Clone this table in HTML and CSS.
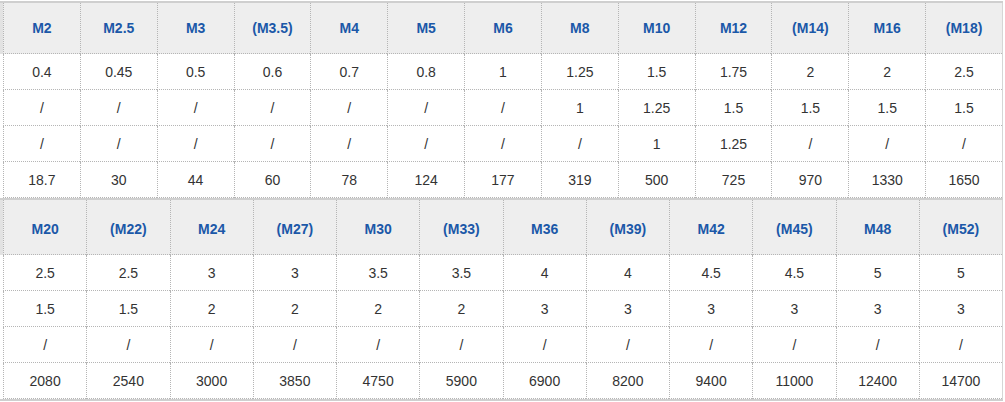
FILE: index.html
```html
<!DOCTYPE html>
<html>
<head>
<meta charset="utf-8">
<link rel="stylesheet" href="styles.css">
</head>
<body>
<div class="block block-first">
<table class="tbl t13">
<thead>
<tr><th>M2</th><th>M2.5</th><th>M3</th><th>(M3.5)</th><th>M4</th><th>M5</th><th>M6</th><th>M8</th><th>M10</th><th>M12</th><th>(M14)</th><th>M16</th><th>(M18)</th></tr>
</thead>
<tbody>
<tr><td>0.4</td><td>0.45</td><td>0.5</td><td>0.6</td><td>0.7</td><td>0.8</td><td>1</td><td>1.25</td><td>1.5</td><td>1.75</td><td>2</td><td>2</td><td>2.5</td></tr>
<tr><td>/</td><td>/</td><td>/</td><td>/</td><td>/</td><td>/</td><td>/</td><td>1</td><td>1.25</td><td>1.5</td><td>1.5</td><td>1.5</td><td>1.5</td></tr>
<tr><td>/</td><td>/</td><td>/</td><td>/</td><td>/</td><td>/</td><td>/</td><td>/</td><td>1</td><td>1.25</td><td>/</td><td>/</td><td>/</td></tr>
<tr><td>18.7</td><td>30</td><td>44</td><td>60</td><td>78</td><td>124</td><td>177</td><td>319</td><td>500</td><td>725</td><td>970</td><td>1330</td><td>1650</td></tr>
</tbody>
</table>
</div>
<div class="block">
<table class="tbl t12">
<thead>
<tr><th>M20</th><th>(M22)</th><th>M24</th><th>(M27)</th><th>M30</th><th>(M33)</th><th>M36</th><th>(M39)</th><th>M42</th><th>(M45)</th><th>M48</th><th>(M52)</th></tr>
</thead>
<tbody>
<tr><td>2.5</td><td>2.5</td><td>3</td><td>3</td><td>3.5</td><td>3.5</td><td>4</td><td>4</td><td>4.5</td><td>4.5</td><td>5</td><td>5</td></tr>
<tr><td>1.5</td><td>1.5</td><td>2</td><td>2</td><td>2</td><td>2</td><td>3</td><td>3</td><td>3</td><td>3</td><td>3</td><td>3</td></tr>
<tr><td>/</td><td>/</td><td>/</td><td>/</td><td>/</td><td>/</td><td>/</td><td>/</td><td>/</td><td>/</td><td>/</td><td>/</td></tr>
<tr><td>2080</td><td>2540</td><td>3000</td><td>3850</td><td>4750</td><td>5900</td><td>6900</td><td>8200</td><td>9400</td><td>11000</td><td>12400</td><td>14700</td></tr>
</tbody>
</table>
</div>
</body>
</html>
```
FILE: styles.css
```css
html, body {
  margin: 0;
  padding: 0;
  background: #ffffff;
}
body {
  padding-top: 1px;
  font-family: "Liberation Sans", Arial, sans-serif;
}
.block {
  width: 1003px;
  padding-left: 3px;
  box-sizing: border-box;
  border-bottom: 2px solid #cfcfcf;
}
.block-first {
  border-top: 2px solid #cfcfcf;
}
.tbl {
  width: 1000px;
  table-layout: fixed;
  border-collapse: separate;
  border-spacing: 0;
  border-right: 1px solid #d6d6d6;
}
.tbl th,
.tbl td {
  box-sizing: border-box;
  padding: 0;
  text-align: center;
  vertical-align: middle;
  border-left: 1px dotted #b5b5b5;
  border-bottom: 1px dotted #b5b5b5;
}
.tbl th {
  background: #eeeeee;
  color: #1b58a8;
  font-weight: bold;
  font-size: 14px;
}
.tbl th:first-child {
  box-shadow: -3px 0 0 #e2e2e2;
}
.tbl td {
  height: 36px;
  color: #333333;
  font-size: 14px;
}
.t13 th {
  height: 51px;
}
.t12 th {
  height: 55px;
  padding-top: 3px;
}
```
